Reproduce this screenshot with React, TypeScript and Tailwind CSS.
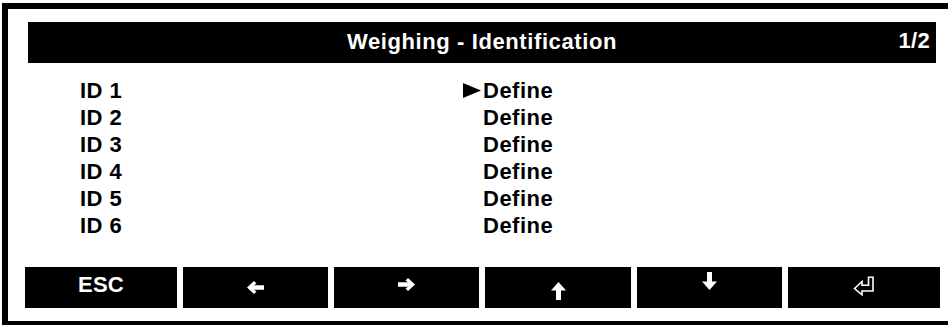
import React from 'react';

const font = { fontFamily: '"Liberation Sans", Arial, Helvetica, sans-serif' };

const ArrowLeft = () => (
  <svg width="17" height="13" viewBox="0 0 17 13" className="fill-white">
    <path d="M0 6.5 L7 0 L9.5 2.4 L7 4.3 L17 4.3 L17 8.7 L7 8.7 L9.5 10.6 L7 13 Z" />
  </svg>
);

const ArrowRight = () => (
  <svg width="17" height="13" viewBox="0 0 17 13" className="fill-white">
    <path d="M17 6.5 L10 0 L7.5 2.4 L10 4.3 L0 4.3 L0 8.7 L10 8.7 L7.5 10.6 L10 13 Z" />
  </svg>
);

const ArrowUp = () => (
  <svg width="15" height="18" viewBox="0 0 15 18" className="fill-white">
    <path d="M7.5 0 L15 8.5 L10 8.5 L10 18 L5 18 L5 8.5 L0 8.5 Z" />
  </svg>
);

const ArrowDown = () => (
  <svg width="15" height="18" viewBox="0 0 15 18" className="fill-white">
    <path d="M7.5 18 L15 9.5 L10 9.5 L10 0 L5 0 L5 9.5 L0 9.5 Z" />
  </svg>
);

const EnterIcon = () => (
  <svg width="22" height="20" viewBox="0 0 22 20" fill="none" className="stroke-white">
    <path d="M1.5 12.5 L9 5.5 L9 9.3 L15.5 9.3 L15.5 1.2 L20 1.2 L20 15 L9 15 L9 18.8 Z" strokeWidth="1.6" />
  </svg>
);

const Pointer = () => (
  <svg width="18" height="15" viewBox="0 0 18 15" className="fill-black">
    <path d="M0 0 L18 7.5 L0 15 Z" />
  </svg>
);

const rows = ['ID 1', 'ID 2', 'ID 3', 'ID 4', 'ID 5', 'ID 6'];

const keys: { w: string; content: React.ReactNode; pad: string }[] = [
  { w: 'w-[152px]', content: <span className="text-[22px] font-bold tracking-[0.3px] leading-[22px]">ESC</span>, pad: 'pt-[7px]' },
  { w: 'w-[145px]', content: <ArrowLeft />, pad: 'pt-[14px]' },
  { w: 'w-[145px]', content: <ArrowRight />, pad: 'pt-[11px]' },
  { w: 'w-[146px]', content: <ArrowUp />, pad: 'pt-[15px]' },
  { w: 'w-[145px]', content: <ArrowDown />, pad: 'pt-[5px]' },
  { w: 'w-[152px]', content: <EnterIcon />, pad: 'pt-[9px]' },
];

export default function App() {
  return (
    <div className="w-[948px] h-[325px] overflow-hidden bg-white text-black" style={font}>
      <div className="ml-[2px] mt-[3px] w-[1000px] h-[324px] border-[6px] border-black">
        <div className="ml-[20px] mt-[13px] w-[908px] h-[41px] bg-black text-white flex items-center justify-center relative">
          <div className="text-[22px] font-bold tracking-[0.6px] leading-[24px] pb-[2px]">
            Weighing - Identification
          </div>
          <div className="absolute right-[6px] top-[7px] text-[22px] font-bold tracking-[0.3px] leading-[24px]">1/2</div>
        </div>

        <div className="mt-[14px] ml-[72px] text-[22px] font-bold leading-[27px] tracking-[0.5px]">
          {rows.map((r, i) => (
            <div key={r} className="flex">
              <div className="w-[383px]">{r}</div>
              <div className="w-[20px] flex items-center">
                {i === 0 && <Pointer />}
              </div>
              <div>Define</div>
            </div>
          ))}
        </div>

        <div className="mt-[28px] ml-[17px] flex gap-[6px]">
          {keys.map((k, i) => (
            <div key={i} className={`${k.w} h-[41px] bg-black text-white flex justify-center ${k.pad}`}>
              {k.content}
            </div>
          ))}
        </div>
      </div>
    </div>
  );
}
